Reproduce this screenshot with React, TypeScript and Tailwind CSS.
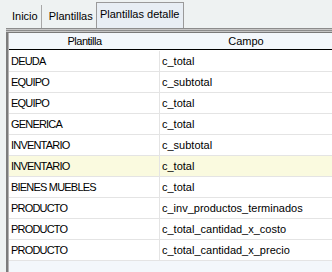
const rows = [
  { plantilla: "DEUDA", campo: "c_total" },
  { plantilla: "EQUIPO", campo: "c_subtotal" },
  { plantilla: "EQUIPO", campo: "c_total" },
  { plantilla: "GENERICA", campo: "c_total" },
  { plantilla: "INVENTARIO", campo: "c_subtotal" },
  { plantilla: "INVENTARIO", campo: "c_total", selected: true },
  { plantilla: "BIENES MUEBLES", campo: "c_total" },
  { plantilla: "PRODUCTO", campo: "c_inv_productos_terminados" },
  { plantilla: "PRODUCTO", campo: "c_total_cantidad_x_costo" },
  { plantilla: "PRODUCTO", campo: "c_total_cantidad_x_precio" },
];

export default function App() {
  return (
    <div className="w-[332px] h-[272px] overflow-hidden bg-[#eef2f2] text-[11px] text-black font-['Liberation_Sans',Arial,sans-serif] flex flex-col">
      {/* tabs */}
      <div className="h-[28px] shrink-0 flex items-end pl-[4px]">
        <div className="h-[23px] flex items-center pl-[8px] pr-[3px] border-r border-[#a8a8a8]">Inicio</div>
        <div className="h-[23px] flex items-center pl-[7px] pr-[3px]">Plantillas</div>
        <div className="h-[26px] w-[88px] flex items-center justify-center whitespace-nowrap border border-b-0 border-[#9a9a9a] bg-[#e8eef4] pb-[3px]">
          Plantillas detalle
        </div>
      </div>

      <div className="ml-[6px] flex-1 flex flex-col min-h-0">
        {/* separator stripes */}
        <div className="shrink-0 flex flex-col">
          <div className="h-px bg-[#8c8c8c]" />
          <div className="h-px bg-[#c6c6c6]" />
          <div className="h-px bg-[#8c8c8c]" />
          <div className="h-px bg-[#c6c6c6]" />
          <div className="h-px bg-[#7a7a7a]" />
        </div>

        <div className="flex-1 flex border-l-2 border-[#7c7c7c]">
          <div className="flex-1 flex flex-col border-l border-[#b4b4b4] bg-[#f3f7fb]">
            {/* header */}
            <div className="h-[17px] shrink-0 flex border-b border-black">
              <div className="w-[151px] flex items-center justify-center tracking-[-0.5px]">Plantilla</div>
              <div className="flex-1 flex items-center justify-center">Campo</div>
            </div>

            <div className="bg-white pt-[1px]">
              {rows.map((r, i) => (
                <div
                  key={i}
                  className={`h-[21px] flex border-b border-[#e4e4e4] ${r.selected ? "bg-[#fafadf]" : "bg-white"}`}
                >
                  <div className="w-[151px] flex items-center pl-[2px] tracking-[-0.8px] border-r border-[#e4e4e4] whitespace-nowrap">
                    {r.plantilla}
                  </div>
                  <div className="flex-1 flex items-center pl-[2px] whitespace-nowrap">{r.campo}</div>
                </div>
              ))}
            </div>
          </div>
        </div>
      </div>
    </div>
  );
}
